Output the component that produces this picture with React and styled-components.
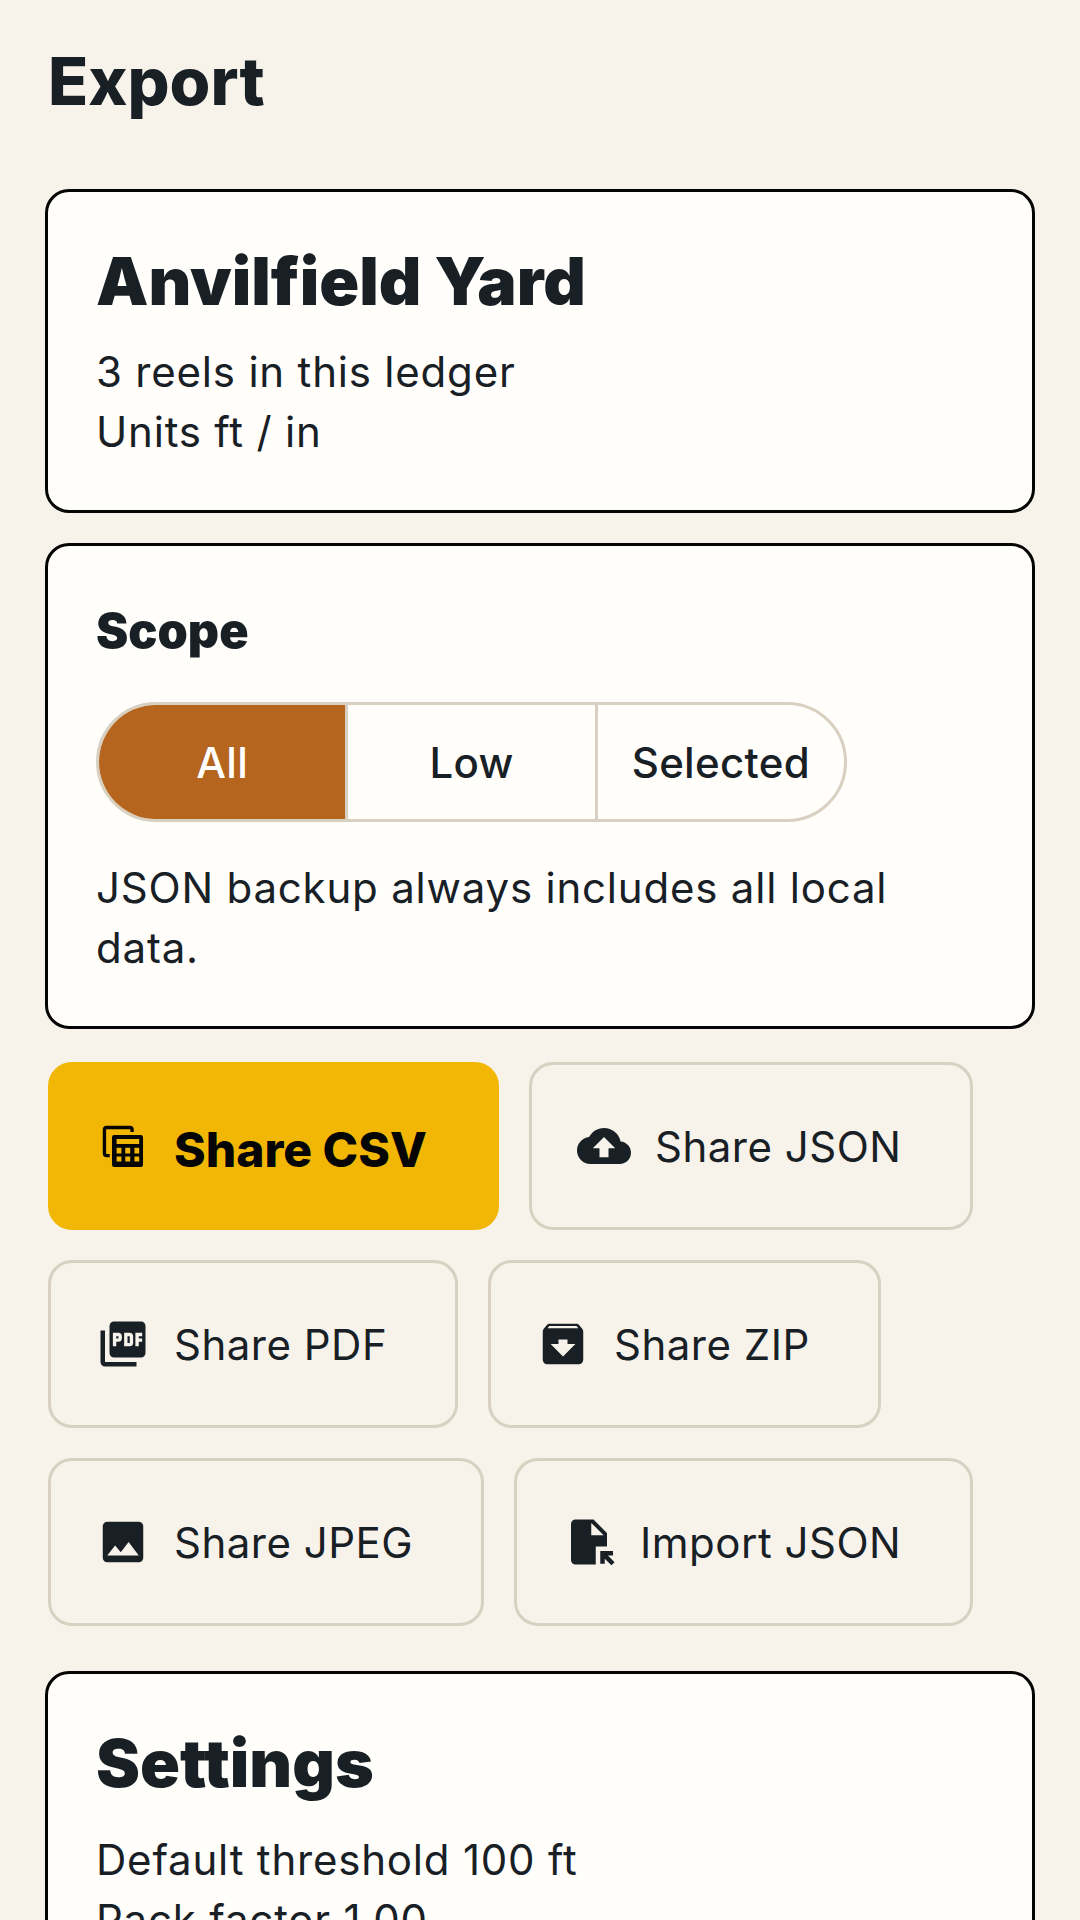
import React from 'react';
import styled, { createGlobalStyle } from 'styled-components';
import { MdCloudUpload, MdPictureAsPdf, MdArchive, MdImage, MdFileOpen } from 'react-icons/md';

const GlobalStyle = createGlobalStyle`
  html, body {
    margin: 0;
    padding: 0;
    background: #f7f3eb;
  }
  #root {
    height: 1920px;
    overflow: hidden;
  }
`;

const Page = styled.div`
  box-sizing: border-box;
  width: 1080px;
  padding: 45px 45px 48px 48px;
  font-family: Inter, "Noto Sans", sans-serif;
  color: #182026;
`;

const PageTitle = styled.h1`
  margin: 0 0 72px;
  font-size: 66px;
  line-height: 72px;
  font-weight: 800;
`;

const Card = styled.section`
  box-sizing: border-box;
  width: 990px;
  margin: 0 0 30px -3px;
  padding: 48px;
  background: #fffefa;
  border: 3px solid #050505;
  border-radius: 24px;
`;

const CardTitle = styled.h2`
  margin: 0 0 ${(p) => p.$gap}px;
  font-size: 66px;
  line-height: 82px;
  font-weight: 900;
`;

const Line = styled.div`
  font-size: 42px;
  line-height: 60px;
  letter-spacing: 0.8px;
`;

const SectionLabel = styled.h3`
  margin: 0 0 35px;
  font-size: 48.5px;
  line-height: 73px;
  font-weight: 900;
`;

const Segments = styled.div`
  display: flex;
  width: 751px;
  height: 120px;
  margin-bottom: 36px;
  border: 3px solid #d8d0c0;
  border-radius: 60px;
  overflow: hidden;
  box-sizing: border-box;
`;

const Segment = styled.div`
  flex: 1;
  display: flex;
  align-items: center;
  justify-content: center;
  font-size: 42px;
  font-weight: 500;
  letter-spacing: 0.3px;
  background: ${(p) => (p.$active ? '#b5651d' : 'transparent')};
  color: ${(p) => (p.$active ? '#ffffff' : '#182026')};
  & + & {
    border-left: 3px solid #d8d0c0;
  }
`;

const Actions = styled.div`
  display: flex;
  flex-wrap: wrap;
  gap: 30px;
  margin: 33px 0 45px;
  width: 990px;
`;

const Action = styled.button`
  box-sizing: border-box;
  display: flex;
  align-items: center;
  gap: 24px;
  height: 168px;
  width: ${(p) => p.$w}px;
  padding: 0 45px;
  border-radius: 24px;
  border: 3px solid ${(p) => (p.$primary ? '#f2b705' : '#d8d0c0')};
  background: ${(p) => (p.$primary ? '#f2b705' : 'transparent')};
  color: ${(p) => (p.$primary ? '#050505' : '#182026')};
  font-family: inherit;
  font-size: ${(p) => (p.$primary ? '48px' : '42px')};
  font-weight: ${(p) => (p.$primary ? 800 : 400)};
  letter-spacing: ${(p) => (p.$primary ? '0' : '0.5px')};
  white-space: nowrap;
  svg {
    flex: none;
    width: 54px;
    height: 54px;
  }
`;

const PrimaryLabel = styled.span`
  padding-top: 6px;
`;

const CalcStack = () => (
  <svg viewBox="0 0 24 24" fill="currentColor">
    <path d="M16.05 5.8V4.75a1 1 0 0 0-1-1H4.75a1 1 0 0 0-1 1v10.5a1 1 0 0 0 1 1H6.1" fill="none" stroke="currentColor" strokeWidth="1.5" />
    <path
      fillRule="evenodd"
      d="M8.1 7.1h11.8a1 1 0 0 1 1 1v12.2a1 1 0 0 1-1 1H8.1a1 1 0 0 1-1-1V8.1a1 1 0 0 1 1-1zM9.15 8.9v2.2h10.05V8.9zM9.15 12.8v2.5h2.15v-2.5zM13 12.8v2.5h2.2v-2.5zM17.1 12.8v2.5h2.1v-2.5zM9.15 16.7v2.2h2.15v-2.2zM13 16.7v2.2h2.2v-2.2zM17.1 16.7v2.2h2.1v-2.2z"
    />
  </svg>
);

export default function App() {
  return (
    <Page>
      <GlobalStyle />
      <PageTitle>Export</PageTitle>
      <Card>
        <CardTitle $gap={20}>Anvilfield Yard</CardTitle>
        <Line>3 reels in this ledger</Line>
        <Line>Units ft / in</Line>
      </Card>
      <Card>
        <SectionLabel>Scope</SectionLabel>
        <Segments>
          <Segment $active>All</Segment>
          <Segment>Low</Segment>
          <Segment>Selected</Segment>
        </Segments>
        <Line>JSON backup always includes all local data.</Line>
      </Card>
      <Actions>
        <Action $primary $w={451}><CalcStack /><PrimaryLabel>Share CSV</PrimaryLabel></Action>
        <Action $w={444}><MdCloudUpload />Share JSON</Action>
        <Action $w={410}><MdPictureAsPdf />Share PDF</Action>
        <Action $w={393}><MdArchive />Share ZIP</Action>
        <Action $w={436}><MdImage />Share JPEG</Action>
        <Action $w={459}><MdFileOpen />Import JSON</Action>
      </Actions>
      <Card>
        <CardTitle $gap={26}>Settings</CardTitle>
        <Line>Default threshold 100 ft</Line>
        <Line>Pack factor 1.00</Line>
      </Card>
    </Page>
  );
}
